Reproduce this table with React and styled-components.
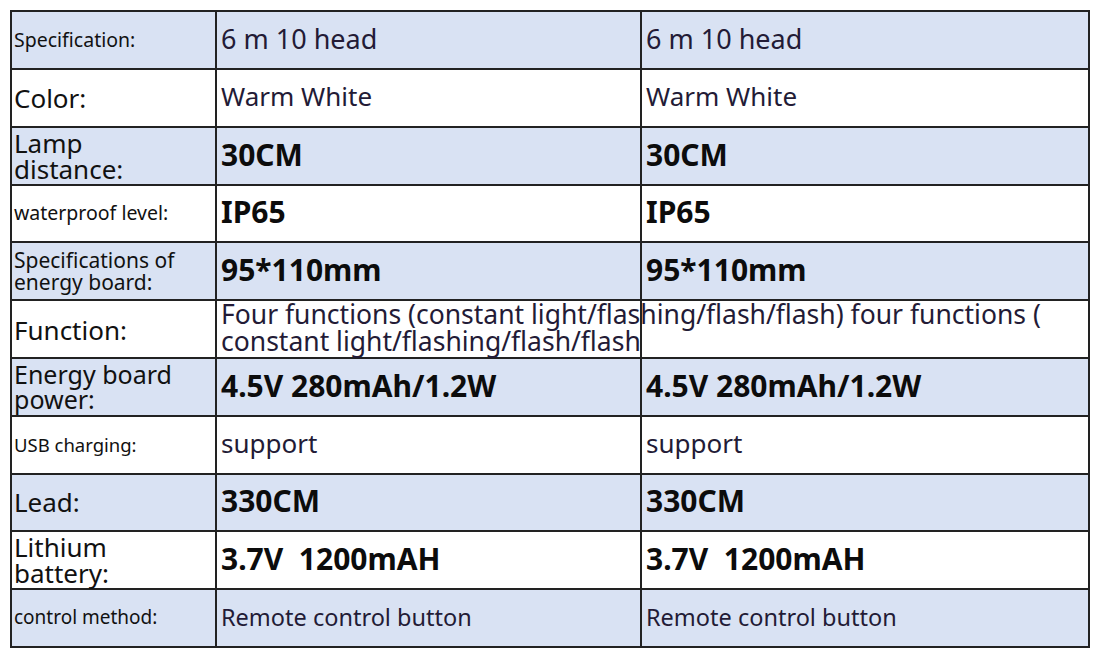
import styled, { createGlobalStyle } from 'styled-components';

const GlobalStyle = createGlobalStyle`
  html, body {
    margin: 0;
    padding: 0;
    background: #ffffff;
  }
  body {
    font-family: "Noto Sans", "Open Sans", sans-serif;
    color: #111;
  }
`;

const rows = [
  { label: 'Specification:', labelSize: 19.5, value: '6 m 10 head', kind: 'plain', size: 27, tint: true },
  { label: 'Color:', labelSize: 26, value: 'Warm White', kind: 'plain', size: 26 },
  { label: ['Lamp', 'distance:'], labelSize: 26, value: '30CM', kind: 'bold', size: 30, tint: true },
  { label: 'waterproof level:', labelSize: 19.5, value: 'IP65', kind: 'bold', size: 30 },
  { label: ['Specifications of', 'energy board:'], labelSize: 21, value: '95*110mm', kind: 'bold', size: 30, tint: true },
  { label: 'Function:', labelSize: 26, kind: 'function' },
  { label: ['Energy board', 'power:'], labelSize: 25, value: '4.5V 280mAh/1.2W', kind: 'bold', size: 30, tint: true },
  { label: 'USB charging:', labelSize: 18.5, value: 'support', kind: 'plain', size: 26 },
  { label: 'Lead:', labelSize: 26, value: '330CM', kind: 'bold', size: 30, tint: true },
  { label: ['Lithium', 'battery:'], labelSize: 26, value: '3.7V\u00a0\u00a01200mAH', kind: 'bold', size: 30 },
  { label: 'control method:', labelSize: 19, value: 'Remote control button', kind: 'plain', size: 23.5, tint: true },
];

const Page = styled.div`
  padding: 10px 10px 0 10px;
`;

const Table = styled.div`
  width: 1080px;
  border: 2px solid #222;
  box-sizing: border-box;
`;

const Row = styled.div`
  display: grid;
  grid-template-columns: 203px 425px 448px;
  height: 56px;
  box-sizing: border-box;
  background: ${(p) => (p.$tint ? '#d9e2f3' : '#ffffff')};
  & + & {
    border-top: 2px solid #222;
    height: 57.8px;
  }
`;

const Label = styled.div`
  display: flex;
  align-items: center;
  padding-left: 2px;
  font-size: ${(p) => p.$size}px;
  line-height: ${(p) => (p.$size >= 24 ? 1 : 1.05)};
  color: #111;
  white-space: nowrap;
`;

const LabelLines = styled.span`
  display: flex;
  flex-direction: column;
`;

const Cell = styled.div`
  position: relative;
  display: flex;
  align-items: center;
  padding-left: 4px;
  padding-bottom: 3px;
  border-left: 2px solid #222;
  font-size: ${(p) => p.$size}px;
  font-weight: ${(p) => (p.$bold ? 700 : 400)};
  color: ${(p) => (p.$bold ? '#0c0c0c' : '#231b36')};
  white-space: nowrap;
`;

const FunctionCell = styled.div`
  display: flex;
  flex-direction: column;
  justify-content: center;
  padding-left: 4px;
  padding-bottom: 3px;
  border-left: 2px solid #222;
  font-size: 26.5px;
  line-height: 27px;
  color: #231b36;
  white-space: nowrap;
`;

const EmptyCell = styled.div`
  position: relative;
  border-left: 2px solid #222;
`;

function LabelText({ label }) {
  if (Array.isArray(label)) {
    return (
      <LabelLines>
        <span>{label[0]}</span>
        <span>{label[1]}</span>
      </LabelLines>
    );
  }
  return <span>{label}</span>;
}

export default function App() {
  return (
    <Page>
      <GlobalStyle />
      <Table>
        {rows.map((r, i) => (
          <Row key={i} $tint={r.tint}>
            <Label $size={r.labelSize}>
              <LabelText label={r.label} />
            </Label>
            {r.kind === 'function' ? (
              <>
                <FunctionCell>
                  <span>Four functions (constant light/flashing/flash/flash) four functions (</span>
                  <span>constant light/flashing/flash/flash</span>
                </FunctionCell>
                <EmptyCell />
              </>
            ) : (
              <>
                <Cell $size={r.size} $bold={r.kind === 'bold'}>{r.value}</Cell>
                <Cell $size={r.size} $bold={r.kind === 'bold'}>{r.value}</Cell>
              </>
            )}
          </Row>
        ))}
      </Table>
    </Page>
  );
}
